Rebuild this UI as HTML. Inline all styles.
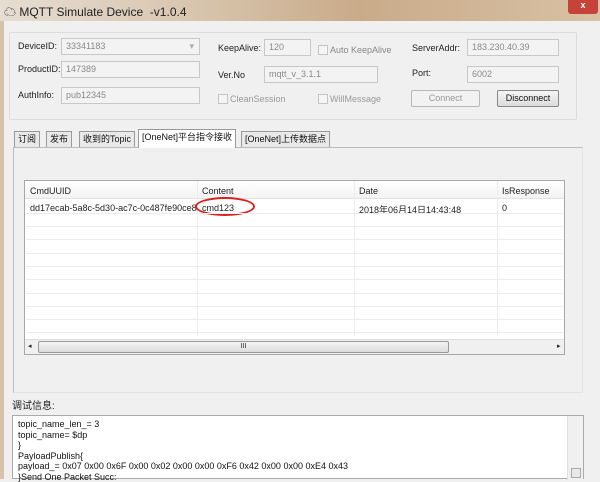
<!DOCTYPE html><html><head><style>
*{margin:0;padding:0;box-sizing:border-box;white-space:nowrap}
body{width:600px;height:479px;overflow:hidden;background:#f0f0f0;font-family:"Liberation Sans","Noto Sans CJK SC",sans-serif;font-size:9px;color:#222;position:relative}
.a{position:absolute}
.tb{left:0;top:0;width:600px;height:21px;background:linear-gradient(90deg,#e6ddd3 0%,#d9c7b1 30%,#c9ab89 60%,#d8c1a5 100%)}
.in{position:absolute;background:#f3f3f3;border:1px solid #c8c8c8;color:#8a8a8a;padding:2px 4px;height:17px;font-size:9px}
.lb{position:absolute;font-size:9px;color:#222}
.cb{position:absolute;width:10px;height:10px;border:1px solid #c4c4c4;background:#f5f5f5}
.btn{position:absolute;border:1px solid #b8b8b8;background:#f2f2f2;text-align:center;font-size:9px;color:#999;height:17px;line-height:15px;border-radius:2px}
.tab{position:absolute;top:131px;height:16px;border:1px solid #999;border-bottom:none;background:#e9e9e9;font-size:9px;line-height:14px;padding:0 3px;color:#111}
.row{position:absolute;left:1px;right:1px;height:1px;background:#ececec}
.col{position:absolute;top:0;width:1px;height:155px;background:#ececec}
</style></head><body>
<div class="a tb"></div>
<div class="a" style="left:4px;top:3px;font-size:12px;color:#222">☁ MQTT Simulate Device &nbsp;-v1.0.4</div>
<div class="a" style="left:568px;top:0;width:30px;height:14px;background:#c7433a;border-radius:0 0 3px 3px;color:#fff;text-align:center;font-size:9px;font-weight:bold">x</div>
<div class="a" style="left:0;top:21px;width:4px;height:458px;background:#d6c3ab"></div>
<div class="a" style="left:9px;top:32px;width:568px;height:88px;border:1px solid #dcdcdc;border-radius:2px"></div>
<div class="lb" style="left:18px;top:41px">DeviceID:</div>
<div class="in" style="left:61px;top:38px;width:139px">33341183<span style="position:absolute;right:5px;color:#aaa">▾</span></div>
<div class="lb" style="left:18px;top:64px">ProductID:</div>
<div class="in" style="left:61px;top:61px;width:139px">147389</div>
<div class="lb" style="left:18px;top:90px">AuthInfo:</div>
<div class="in" style="left:61px;top:87px;width:139px">pub12345</div>
<div class="lb" style="left:218px;top:43px">KeepAlive:</div>
<div class="in" style="left:264px;top:39px;width:47px">120</div>
<div class="cb" style="left:318px;top:45px"></div><div class="lb" style="left:330px;top:45px;color:#888">Auto KeepAlive</div>
<div class="lb" style="left:218px;top:70px">Ver.No</div>
<div class="in" style="left:264px;top:66px;width:114px">mqtt_v_3.1.1</div>
<div class="cb" style="left:218px;top:94px"></div><div class="lb" style="left:230px;top:94px;color:#999">CleanSession</div>
<div class="cb" style="left:318px;top:94px"></div><div class="lb" style="left:330px;top:94px;color:#999">WillMessage</div>
<div class="lb" style="left:412px;top:43px">ServerAddr:</div>
<div class="in" style="left:467px;top:39px;width:92px">183.230.40.39</div>
<div class="lb" style="left:412px;top:68px">Port:</div>
<div class="in" style="left:467px;top:66px;width:92px">6002</div>
<div class="btn" style="left:411px;top:90px;width:69px">Connect</div>
<div class="btn" style="left:497px;top:90px;width:62px;color:#111;border-color:#888;background:linear-gradient(#f6f6f6,#dcdcdc)">Disconnect</div>
<div class="a" style="left:13px;top:147px;width:570px;height:246px;border:1px solid #bbb;border-right-color:#e4e4e4;border-bottom-color:#e4e4e4"></div>
<div class="tab" style="left:14px">订阅</div>
<div class="tab" style="left:46px">发布</div>
<div class="tab" style="left:79px">收到的Topic</div>
<div class="tab" style="left:138px;top:129px;height:19px;background:#fff;z-index:2">[OneNet]平台指令接收</div>
<div class="tab" style="left:241px">[OneNet]上传数据点</div>
<div class="a" style="left:24px;top:180px;width:541px;height:175px;border:1px solid #a8a8a8;background:#fff;overflow:hidden">
 <div class="a" style="left:0;top:0;width:100%;height:18px;background:linear-gradient(#fff,#f3f3f3);border-bottom:1px solid #e2e2e2"></div>
 <div class="col" style="left:172px"></div><div class="col" style="left:329px"></div><div class="col" style="left:472px"></div>
 <div class="a" style="left:5px;top:5px">CmdUUID</div><div class="a" style="left:177px;top:5px">Content</div><div class="a" style="left:334px;top:5px">Date</div><div class="a" style="left:477px;top:5px">IsResponse</div>
 <div class="a" style="left:5px;top:22px">dd17ecab-5a8c-5d30-ac7c-0c487fe90ce8</div><div class="a" style="left:177px;top:22px">cmd123</div><div class="a" style="left:334px;top:22px">2018年06月14日14:43:48</div><div class="a" style="left:477px;top:22px">0</div>
 <div class="a" style="left:170px;top:16px;width:60px;height:19px;border:2px solid #d8221e;border-radius:50%"></div>
 <div class="row" style="top:32px"></div><div class="row" style="top:45px"></div><div class="row" style="top:58px"></div><div class="row" style="top:72px"></div><div class="row" style="top:85px"></div><div class="row" style="top:98px"></div><div class="row" style="top:112px"></div><div class="row" style="top:125px"></div><div class="row" style="top:138px"></div><div class="row" style="top:151px"></div>
 <div class="a" style="left:0;top:158px;width:100%;height:16px;background:#f0f0f0;border-top:1px solid #ddd"></div>
 <div class="a" style="left:13px;top:160px;width:411px;height:12px;border:1px solid #999;border-radius:2px;background:linear-gradient(#f4f4f4,#dcdcdc);text-align:center;font-size:7px;line-height:10px">III</div>
 <div class="a" style="left:3px;top:161px;font-size:7px">◂</div><div class="a" style="left:532px;top:161px;font-size:7px">▸</div>
</div>
<div class="lb" style="left:12px;top:397px;font-size:10px">调试信息:</div>
<div class="a" style="left:12px;top:415px;width:572px;height:64px;border:1px solid #aaa;background:#fff;font-size:9px;line-height:10.5px;padding:3px 5px;color:#111">topic_name_len_= 3<br>topic_name= $dp<br>}<br>PayloadPublish{<br>payload_= 0x07 0x00 0x6F 0x00 0x02 0x00 0x00 0xF6 0x42 0x00 0x00 0xE4 0x43<br>}Send One Packet Succ:
<div class="a" style="right:0;top:0;width:16px;height:64px;background:#f0f0f0;border-left:1px solid #e0e0e0"><div class="a" style="left:3px;top:52px;width:10px;height:10px;border:1px solid #aaa;background:#e8e8e8"></div></div></div>
</body></html>
